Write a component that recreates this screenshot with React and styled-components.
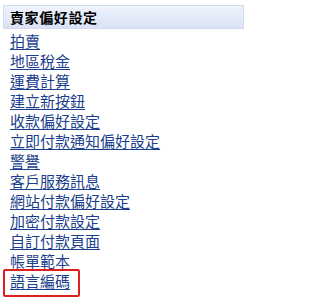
import React from 'react';
import styled, { createGlobalStyle } from 'styled-components';

const GlobalStyle = createGlobalStyle`
    html, body {
        margin: 0;
        padding: 0;
        background: #ffffff;
    }
`;

const Panel = styled.div`
    width: 251px;
    height: 300px;
    padding: 5px 0 0 3px;
    box-sizing: border-box;
    overflow: hidden;
    font-family: "Noto Sans CJK TC", "Noto Sans", sans-serif;
`;

const Header = styled.div`
    width: 241px;
    height: 24px;
    box-sizing: border-box;
    padding-left: 6px;
    display: flex;
    align-items: center;
    border: 1px solid #d3dbec;
    background: linear-gradient(to bottom, #eef2fc 0%, #e2e9f8 60%, #d9e2f5 100%);
    color: #000000;
    font-size: 14px;
    font-weight: 700;
    letter-spacing: 0.6px;
`;

const LinkList = styled.ul`
    list-style: none;
    margin: 1px 0 0 0;
    padding: 0 0 0 7px;
`;

const Item = styled.li`
    position: relative;
    height: 20px;
    line-height: 20px;

    ${ props => props.highlighted && `
        &::after {
            content: '';
            position: absolute;
            top: -1px;
            left: -7px;
            width: 77px;
            height: 28px;
            box-sizing: border-box;
            border: 2px solid #dd1f1f;
            border-radius: 2px;
            pointer-events: none;
        }
    ` }
`;

const Link = styled.a`
    color: #1b3f8c;
    font-size: 15px;
    text-decoration: underline;
    text-underline-offset: 2px;
    cursor: pointer;
`;

const links = [
    '拍賣',
    '地區稅金',
    '運費計算',
    '建立新按鈕',
    '收款偏好設定',
    '立即付款通知偏好設定',
    '警譽',
    '客戶服務訊息',
    '網站付款偏好設定',
    '加密付款設定',
    '自訂付款頁面',
    '帳單範本',
    '語言編碼'
];

export default function App() {
    return (
        <Panel>
            <GlobalStyle />
            <Header>賣家偏好設定</Header>
            <LinkList>
                { links.map((label, index) => (
                    <Item key={ label } highlighted={ index === links.length - 1 }>
                        <Link>{ label }</Link>
                    </Item>
                )) }
            </LinkList>
        </Panel>
    );
}
